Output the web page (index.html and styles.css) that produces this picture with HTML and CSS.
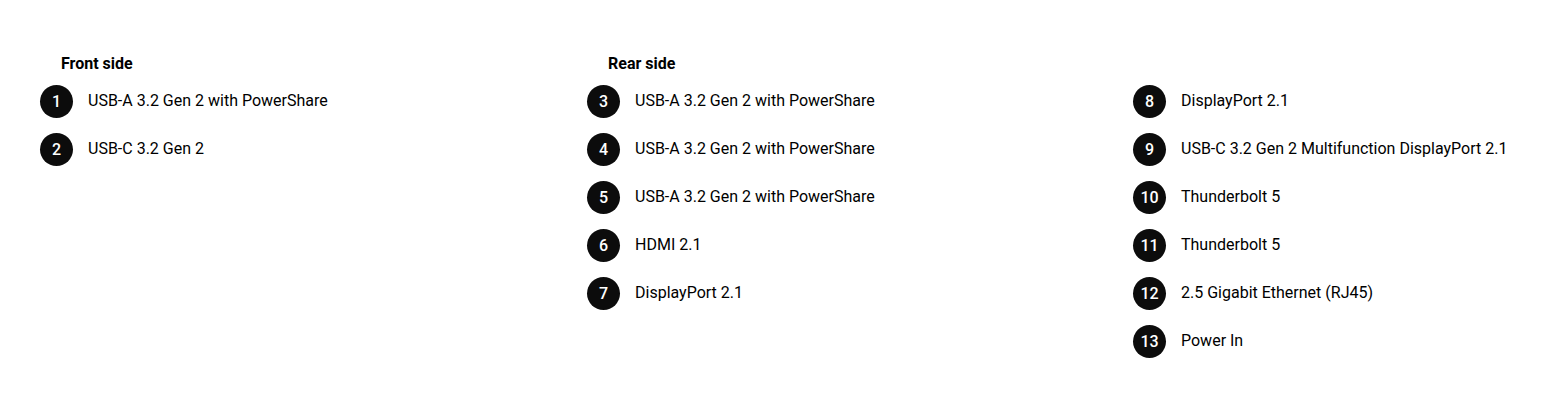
FILE: index.html
```html
<!DOCTYPE html>
<html>
<head>
<meta charset="utf-8">
<link rel="stylesheet" href="styles.css">
</head>
<body>
<div class="ports">
  <section class="col">
    <h3 class="title">Front side</h3>
    <ul class="list">
      <li class="item"><span class="num">1</span><span class="label">USB-A 3.2 Gen 2 with PowerShare</span></li>
      <li class="item"><span class="num">2</span><span class="label">USB-C 3.2 Gen 2</span></li>
    </ul>
  </section>
  <section class="col">
    <h3 class="title">Rear side</h3>
    <ul class="list">
      <li class="item"><span class="num">3</span><span class="label">USB-A 3.2 Gen 2 with PowerShare</span></li>
      <li class="item"><span class="num">4</span><span class="label">USB-A 3.2 Gen 2 with PowerShare</span></li>
      <li class="item"><span class="num">5</span><span class="label">USB-A 3.2 Gen 2 with PowerShare</span></li>
      <li class="item"><span class="num">6</span><span class="label">HDMI 2.1</span></li>
      <li class="item"><span class="num">7</span><span class="label">DisplayPort 2.1</span></li>
    </ul>
  </section>
  <section class="col">
    <h3 class="title title-empty">&nbsp;</h3>
    <ul class="list">
      <li class="item"><span class="num">8</span><span class="label">DisplayPort 2.1</span></li>
      <li class="item"><span class="num">9</span><span class="label">USB-C 3.2 Gen 2 Multifunction DisplayPort 2.1</span></li>
      <li class="item"><span class="num">10</span><span class="label">Thunderbolt 5</span></li>
      <li class="item"><span class="num">11</span><span class="label">Thunderbolt 5</span></li>
      <li class="item"><span class="num">12</span><span class="label">2.5 Gigabit Ethernet (RJ45)</span></li>
      <li class="item"><span class="num">13</span><span class="label">Power In</span></li>
    </ul>
  </section>
</div>
</body>
</html>
```
FILE: styles.css
```css
html, body {
  margin: 0;
  padding: 0;
  background: #fff;
}
body {
  font-family: Roboto, "Liberation Sans", Arial, sans-serif;
  color: #000;
}
.ports {
  display: grid;
  grid-template-columns: 547px 546px auto;
  padding: 54px 0 0 40px;
}
.title {
  margin: 0 0 3px 21px;
  font-size: 16px;
  font-weight: 700;
  line-height: 20px;
  height: 20px;
  color: #000;
}
.list {
  list-style: none;
  margin: 0;
  padding: 0;
}
.item {
  display: flex;
  align-items: center;
  height: 48px;
}
.num {
  flex: none;
  width: 33px;
  height: 33px;
  border-radius: 50%;
  background: #0c0c0c;
  color: #fff;
  font-size: 16px;
  font-weight: 500;
  display: flex;
  align-items: center;
  justify-content: center;
  margin-right: 15px;
}
.label {
  font-size: 16px;
  line-height: 20px;
  color: #000;
}
```
